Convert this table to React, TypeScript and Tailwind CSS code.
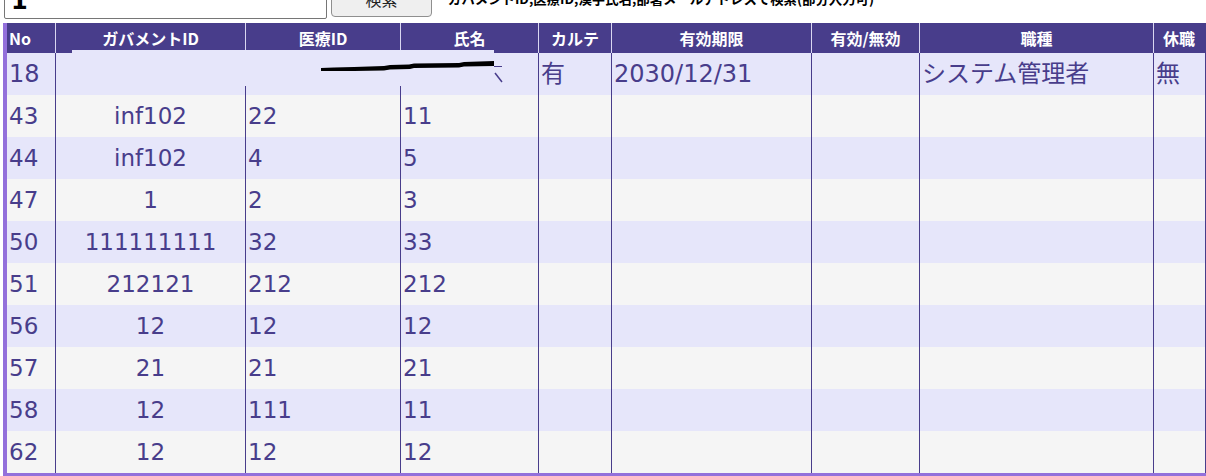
import React from "react";

const cols = "grid grid-cols-[48px_190px_155px_138px_73px_200px_108px_234px_51px]";

const headers = ["No", "ガバメントID", "医療ID", "氏名", "カルテ", "有効期限", "有効/無効", "職種", "休職"];

type Row = string[];
const rows: Row[] = [
  ["18", "", "", "", "有", "2030/12/31", "", "システム管理者", "無"],
  ["43", "inf102", "22", "11", "", "", "", "", ""],
  ["44", "inf102", "4", "5", "", "", "", "", ""],
  ["47", "1", "2", "3", "", "", "", "", ""],
  ["50", "111111111", "32", "33", "", "", "", "", ""],
  ["51", "212121", "212", "212", "", "", "", "", ""],
  ["56", "12", "12", "12", "", "", "", "", ""],
  ["57", "21", "21", "21", "", "", "", "", ""],
  ["58", "12", "111", "11", "", "", "", "", ""],
  ["62", "12", "12", "12", "", "", "", "", ""],
];

export default function App() {
  return (
    <div className="w-[1206px] h-[476px] overflow-hidden bg-white">
      {/* search bar (cut off at top) */}
      <div className="flex items-end -mt-[19px] h-[38px]">
        <div className="ml-[4px] w-[323px] h-[38px] border border-[#767676] rounded-[2px] bg-white flex items-center pl-[6px] pt-[2px] text-[24px] font-bold text-black font-['DejaVu_Sans',sans-serif] leading-none">
          1
        </div>
        <button className="ml-[4px] mb-[2px] w-[101px] h-[36px] border border-[#8f8f8f] rounded-[4px] bg-[#efefef] text-[16px] text-[#222] font-['Noto_Sans_CJK_JP',sans-serif] leading-none flex items-center justify-center">
          検索
        </button>
        <div className="ml-[16px] mb-[14px] text-[13.4px] leading-[14px] font-bold text-black font-['Noto_Sans_CJK_JP',sans-serif] whitespace-nowrap">
          ガバメントID,医療ID,漢字氏名,部署メールアドレスで検索(部分入力可)
        </div>
      </div>

      {/* table */}
      <div className="relative mt-[4px] ml-[3px] w-[1203px] border-l-4 border-b-4 border-[#9370db]">
        <div className={`${cols} h-[30px] bg-[#483d8b] text-white font-bold text-[16px] leading-none font-['Noto_Sans_CJK_JP',sans-serif]`}>
          {headers.map((h, i) => (
            <div
              key={i}
              className={
                i === 0
                  ? "flex items-center pl-[2px]"
                  : "flex items-center justify-center border-l border-[#d9d6f0]"
              }
            >
              {h}
            </div>
          ))}
        </div>
        {rows.map((r, ri) => (
          <div
            key={ri}
            className={`${cols} h-[42px] ${ri % 2 === 0 ? "bg-[#e6e6fa]" : "bg-[#f5f5f5]"} text-[#483d8b] ${ri === 0 ? "text-[24px]" : "text-[23px]"} leading-none font-['DejaVu_Sans','Noto_Sans_CJK_JP',sans-serif] border-r border-[#483d8b]`}
          >
            {r.map((c, ci) => (
              <div
                key={ci}
                className={
                  ci === 0
                    ? "flex items-center pl-[2px]"
                    : ci === 1
                    ? "flex items-center justify-center border-l border-[#483d8b]"
                    : "flex items-center pl-[2px] border-l border-[#483d8b]"
                }
              >
                {c}
              </div>
            ))}
          </div>
        ))}

        {/* redaction box over first row */}
        <div className="absolute left-[65px] top-[27px] w-[422px] h-[36px] bg-[#e6e6fa]" />
        <svg
          className="absolute left-[307px] top-[35px]"
          width="195"
          height="30"
          viewBox="0 0 195 30"
        >
          <polygon
            points="7,10 20,9.5 40,9 70,8 76,7 95,6.5 100,5.5 145,5 150,4 180,3 180,8 150,8.5 145,9.5 100,10 96,11 76,11.5 70,12.5 40,13 20,13 7,13"
            fill="#000"
          />
          <line x1="180" y1="8.5" x2="188" y2="8.5" stroke="#483d8b" strokeWidth="1" />
          <line x1="181" y1="15" x2="188" y2="24" stroke="#483d8b" strokeWidth="1.5" />
        </svg>
      </div>
    </div>
  );
}
